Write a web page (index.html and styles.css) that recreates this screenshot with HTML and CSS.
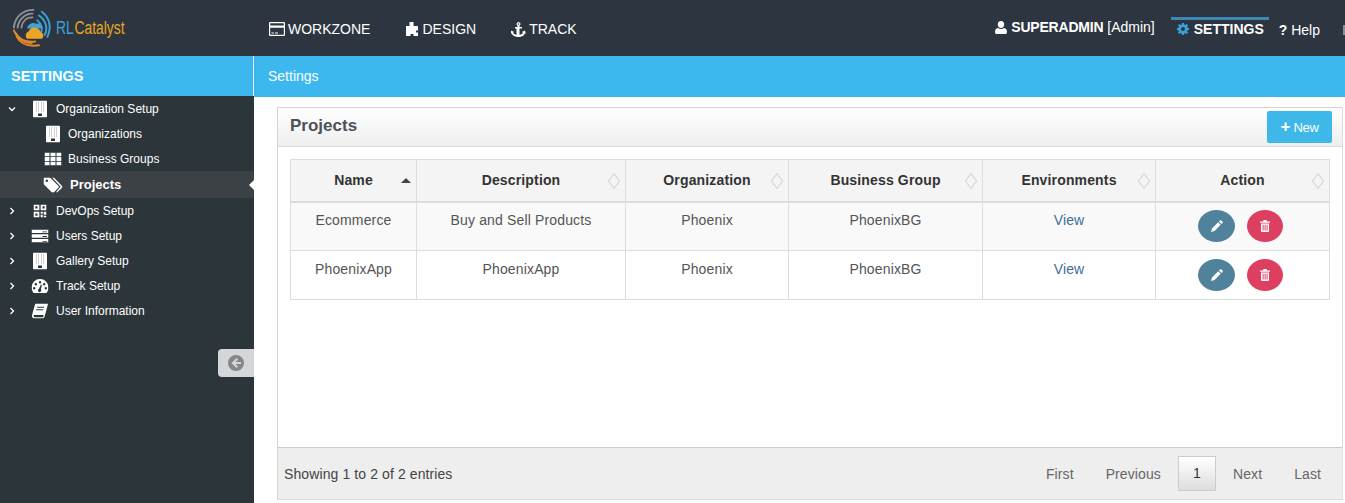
FILE: index.html
```html
<!DOCTYPE html>
<html lang="en">

<head>
    <meta charset="UTF-8" />
    <title>RLCatalyst - Settings</title>
    <link rel="stylesheet" href="styles.css">
</head>

<body>
    <header class="topbar">
        <a class="logo">
            <svg class="logo-mark" viewBox="0 0 44 44" width="41" height="41">
                <g fill="none" stroke-linecap="round">
                    <path d="M2 21C3 10 11 2 23 2" stroke="#8f9296" stroke-width="2" />
                    <path d="M6 21C7 13 13 6 22 6" stroke="#8f9296" stroke-width="2" />
                    <path d="M10 21C11 15 15 10 22 10" stroke="#8f9296" stroke-width="2" />
                    <path d="M32 4C40 10 43 20 38 31" stroke="#3ea4d8" stroke-width="2" />
                    <path d="M29 8C36 13 39 21 35 29" stroke="#3ea4d8" stroke-width="2" />
                    <path d="M27 13C32 17 33 23 31 27" stroke="#3ea4d8" stroke-width="2" />
                    <path d="M2 24C5 32 10 37 21 38" stroke="#e8872a" stroke-width="2" />
                    <path d="M5 31C9 38 16 42 29 40" stroke="#e8872a" stroke-width="2" />
                    <path d="M4 27C8 34 15 37 25 36" stroke="#e8872a" stroke-width="2" />
                </g>
                <path d="M20 24a7 7 0 0 1 10-5c3-1 7 1 7 5z" fill="#3ea4d8" transform="translate(-4 -2)" />
                <path d="M16 33a5 5 0 0 1 2-8 7 7 0 0 1 13 1 4 4 0 0 1 1 7z" fill="#eba524" />
            </svg>
            <span class="logo-text"><span class="logo-rl">RL</span>Catalyst</span>
        </a>
        <nav class="main-nav">
            <a class="nav-item">
                <svg class="icon" viewBox="0 0 16 14" width="16" height="14"><path fill="#fff" fill-rule="evenodd" d="M1 0h14a1 1 0 0 1 1 1v12a1 1 0 0 1-1 1H1a1 1 0 0 1-1-1V1a1 1 0 0 1 1-1zm.2 1.200v2.300h13.600V1.200zm0 4.600v7h13.600v-7zM2.500 10.500h2.500v1H2.500zm3.500 0h3v1H6z" /></svg>
                WORKZONE
            </a>
            <a class="nav-item">
                <svg class="icon" viewBox="0 0 14 14" width="14" height="14"><path fill="#fff" d="M4.500 0h4v4H13v4.500h-2v2h2V14H8.500v-2h-3v2H1V4h3.500z" /></svg>
                DESIGN
            </a>
            <a class="nav-item">
                <svg class="icon" viewBox="0 0 15 15" width="15" height="15"><path fill="#fff" fill-rule="evenodd" d="M7.500 0a2 2 0 0 1 1 3.700V5H11v1.500H8.500v6.300c1.800-.2 3-1 3.500-2L10.800 10l3.200-1.500.8 3.500-1.100-.7C13.500 13.500 11 15 7.500 15S1.500 13.500.3 11.300L-.8 12 0 8.500 3.200 10 2 10.800c.5 1 1.700 1.800 3.500 2V6.500H4V5h2.500V3.700a2 2 0 0 1 1-3.700zm0 1.200a.8.8 0 1 0 0 1.600.8.8 0 0 0 0-1.600z" /></svg>
                TRACK
            </a>
        </nav>
        <div class="user-nav">
            <span class="user-name">
                <svg class="icon" viewBox="0 0 12 13" width="12" height="13"><path fill="#fff" d="M6 0a3.200 3.200 0 0 1 3.200 3.500C9.200 5.500 7.800 7 6 7S2.800 5.500 2.800 3.500A3.200 3.200 0 0 1 6 0zM3 7c.8.700 1.800 1 3 1s2.200-.3 3-1c2 .2 3 1.800 3 4.200 0 1-.7 1.800-1.700 1.800H1.700C.7 13 0 12.200 0 11.200 0 8.800 1 7.200 3 7z" /></svg>
                <span><b>SUPERADMIN</b> [Admin]</span>
            </span>
            <a class="settings-tab">
                <svg class="icon" viewBox="0 0 12 12" width="12" height="12"><path fill="#3aa0dc" fill-rule="evenodd" d="M5 0h2l.3 1.600 1 .4L9.700 1l1.400 1.400-1 1.400.4 1L12 5v2l-1.600.3-.4 1 1 1.400-1.400 1.400-1.400-1-1 .4L7 12H5l-.3-1.600-1-.4-1.400 1L.9 9.600l1-1.400-.4-1L0 7V5l1.600-.3.4-1-1-1.400L2.300 1l1.400 1 1-.4zM6 4a2 2 0 1 0 0 4 2 2 0 0 0 0-4z" /></svg>
                SETTINGS
            </a>
            <a class="help-link"><b>?</b> Help</a>
            <span class="logout-stub"></span>
        </div>
    </header>

    <div class="layout">
        <aside class="sidebar">
            <div class="sidebar-title">SETTINGS</div>
            <ul class="menu">
                <li class="menu-item">
                    <svg class="chev" viewBox="0 0 8 8" width="8" height="8"><path d="M1 2.500l3 3 3-3" /></svg>
                    <svg class="menu-icon" viewBox="0 0 14 17" width="14" height="17"><use href="#building" /></svg>
                    Organization Setup
                </li>
                <li class="menu-item sub">
                    <svg class="menu-icon" viewBox="0 0 14 17" width="14" height="17"><use href="#building" /></svg>
                    Organizations
                </li>
                <li class="menu-item sub">
                    <svg class="menu-icon" viewBox="0 0 17 13" width="17" height="13"><path fill="#fff" d="M0 0h5v3.800H0zm6 0h5v3.800H6zm6 0h5v3.800h-5zM0 4.600h5v3.800H0zm6 0h5v3.800H6zm6 0h5v3.800h-5zM0 9.200h5V13H0zm6 0h5V13H6zm6 0h5V13h-5z" /></svg>
                    Business Groups
                </li>
                <li class="menu-item sub active">
                    <svg class="menu-icon" viewBox="0 0 19 15" width="19" height="15"><path fill="#fff" fill-rule="evenodd" d="M1 0h5.500L15 8.500a1.200 1.200 0 0 1 0 1.700L10.200 15a1.200 1.200 0 0 1-1.700 0L0 6.500V1a1 1 0 0 1 1-1zm2.300 2a1.300 1.300 0 1 0 0 2.600 1.300 1.300 0 0 0 0-2.600z" /><path fill="#fff" d="M8.500 0h1.800l8.300 8.500a1.200 1.200 0 0 1 0 1.700L13.500 15h-1.300l5-5.800z" /></svg>
                    Projects
                </li>
                <li class="menu-item">
                    <svg class="chev" viewBox="0 0 8 8" width="8" height="8"><path d="M2.500 1l3 3-3 3" /></svg>
                    <svg class="menu-icon" viewBox="0 0 14 14" width="13" height="13"><path fill="#fff" fill-rule="evenodd" d="M0 0h6.300v6.300H0zm2 2v2.300h2.300V2zM7.700 0H14v6.300H7.700zm2 2v2.300H12V2zM0 7.700h6.300V14H0zm2 2V12h2.300V9.700zM7.700 7.700H10V10H7.700zm3.300 0h3V11h-3zm-3.300 3.300H10v3H7.700zm3.300 1h3v2h-3z" /></svg>
                    DevOps Setup
                </li>
                <li class="menu-item">
                    <svg class="chev" viewBox="0 0 8 8" width="8" height="8"><path d="M2.500 1l3 3-3 3" /></svg>
                    <svg class="menu-icon" viewBox="0 0 17 13" width="17" height="13"><path fill="#fff" fill-rule="evenodd" d="M0 0h17v3.500H0zm0 4.700h17v3.500H0zm0 4.800h17V13H0zm11-7.600v.8h4.500v-.8zm0 4.700v.8h4.500v-.8zm0 4.800v.8h4.500v-.8z" /></svg>
                    Users Setup
                </li>
                <li class="menu-item">
                    <svg class="chev" viewBox="0 0 8 8" width="8" height="8"><path d="M2.500 1l3 3-3 3" /></svg>
                    <svg class="menu-icon" viewBox="0 0 14 17" width="14" height="17"><use href="#building" /></svg>
                    Gallery Setup
                </li>
                <li class="menu-item">
                    <svg class="chev" viewBox="0 0 8 8" width="8" height="8"><path d="M2.500 1l3 3-3 3" /></svg>
                    <svg class="menu-icon" viewBox="0 0 17 14" width="17" height="14"><path fill="#fff" fill-rule="evenodd" d="M8.500 0A8.500 8.500 0 0 1 17 8.500c0 2-.6 3.700-1.700 5.100-.2.300-.5.400-.8.400H2.500c-.3 0-.6-.1-.8-.4A8.400 8.400 0 0 1 0 8.500 8.500 8.500 0 0 1 8.500 0zM8.500 2a1.200 1.200 0 1 0 0 2.400 1.200 1.200 0 0 0 0-2.400zM4.300 4a1.200 1.200 0 1 0 0 2.400 1.200 1.200 0 0 0 0-2.400zm8.400 0a1.200 1.200 0 1 0 0 2.400 1.200 1.200 0 0 0 0-2.400zM2.700 8a1.200 1.200 0 1 0 0 2.400 1.200 1.200 0 0 0 0-2.400zm11.600 0a1.200 1.200 0 1 0 0 2.400 1.200 1.200 0 0 0 0-2.400zM9.400 5.500L7.500 9.800a1.700 1.700 0 1 0 1.900.5l1-4.500z" /></svg>
                    Track Setup
                </li>
                <li class="menu-item">
                    <svg class="chev" viewBox="0 0 8 8" width="8" height="8"><path d="M2.500 1l3 3-3 3" /></svg>
                    <svg class="menu-icon" viewBox="0 0 16 15" width="16" height="15"><path fill="#fff" fill-rule="evenodd" d="M4 0h11c.7 0 1 .5.8 1.200l-3 11.300c-.3 1.200-1.100 2.500-2.800 2.500H2.500C.8 15 0 13.700 0 12.300 0 12 .1 11.500.2 11L3 1c.1-.6.500-1 1-1zm1.200 3.200l-.3 1h7l.3-1zm-.8 2.600l-.3 1h7l.3-1zM2.800 11.500c-.8 0-1.200.5-1.200 1.100 0 .7.500 1.200 1.200 1.200h7.500c.5 0 .9-.3 1.100-.9l.2-1.400z" /></svg>
                    User Information
                </li>
            </ul>
            <button class="collapse-btn">
                <svg viewBox="0 0 16 16" width="16" height="16"><path fill="#858789" fill-rule="evenodd" d="M8 0a8 8 0 1 1 0 16A8 8 0 0 1 8 0zm.5 3L3.500 8l5 5 1.500-1.500L7.500 9H13V7H7.500L10 4.500z" /></svg>
            </button>
        </aside>

        <main class="content">
            <div class="breadcrumb">Settings</div>
            <section class="panel">
                <div class="panel-head">
                    <h2>Projects</h2>
                    <button class="btn-new"><b>+</b> New</button>
                </div>
                <div class="panel-body">
                    <table class="grid">
                        <colgroup>
                            <col class="c-name"><col class="c-desc"><col class="c-org"><col class="c-bg"><col class="c-env"><col class="c-act">
                        </colgroup>
                        <thead>
                            <tr>
                                <th class="sorted">Name</th>
                                <th>Description</th>
                                <th>Organization</th>
                                <th>Business Group</th>
                                <th>Environments</th>
                                <th>Action</th>
                            </tr>
                        </thead>
                        <tbody>
                            <tr class="odd">
                                <td>Ecommerce</td>
                                <td>Buy and Sell Products</td>
                                <td>Phoenix</td>
                                <td>PhoenixBG</td>
                                <td><a class="view">View</a></td>
                                <td class="actions">
                                    <button class="round edit"><svg viewBox="0 0 12 12" width="12" height="12"><use href="#pencil" /></svg></button>
                                    <button class="round del"><svg viewBox="0 0 10 12" width="10" height="12"><use href="#trash" /></svg></button>
                                </td>
                            </tr>
                            <tr class="even">
                                <td>PhoenixApp</td>
                                <td>PhoenixApp</td>
                                <td>Phoenix</td>
                                <td>PhoenixBG</td>
                                <td><a class="view">View</a></td>
                                <td class="actions">
                                    <button class="round edit"><svg viewBox="0 0 12 12" width="12" height="12"><use href="#pencil" /></svg></button>
                                    <button class="round del"><svg viewBox="0 0 10 12" width="10" height="12"><use href="#trash" /></svg></button>
                                </td>
                            </tr>
                        </tbody>
                    </table>
                </div>
                <div class="panel-foot">
                    <span class="info">Showing 1 to 2 of 2 entries</span>
                    <div class="pager">
                        <a>First</a>
                        <a>Previous</a>
                        <a class="current">1</a>
                        <a>Next</a>
                        <a>Last</a>
                    </div>
                </div>
            </section>
        </main>
    </div>

    <svg class="defs" width="0" height="0">
        <defs>
            <g id="building">
                <path fill="#fff" d="M1 0h12a1 1 0 0 1 1 1v15a1 1 0 0 1-1 1H1a1 1 0 0 1-1-1V1a1 1 0 0 1 1-1z" />
                <path fill="#a8a8a8" d="M3 2h1v1H3zm2 0h1v1H5zm3 0h1v1H8zm2 0h1v1h-1zM3 4h1v1H3zm2 0h1v1H5zm3 0h1v1H8zm2 0h1v1h-1zM3 6h1v1H3zm2 0h1v1H5zm3 0h1v1H8zm2 0h1v1h-1zM3 8h1v1H3zm2 0h1v1H5zm3 0h1v1H8zm2 0h1v1h-1zM3 10h1v1H3zm2 0h1v1H5zm3 0h1v1H8zm2 0h1v1h-1z" />
                <path fill="#2c3539" d="M5 13h4v2.500H5z" />
            </g>
            <path id="pencil" fill="#fff" d="M9 .5a1 1 0 0 1 1.400 0l1.100 1.100a1 1 0 0 1 0 1.400l-1 1L8 1.500zM7.200 2.300l2.500 2.500L3.500 11 0 12l1-3.500z" />
            <path id="trash" fill="#fff" fill-rule="evenodd" d="M3.500 0h3l.5 1.500h3v1.200H0V1.500h3zM1 3.500h8V11a1 1 0 0 1-1 1H2a1 1 0 0 1-1-1zm1.600 1.300v5.700h1V4.800zm2 0v5.700h1V4.800zm2 0v5.700h1V4.800z" />
        </defs>
    </svg>
</body>
</html>
```

FILE: styles.css
```css
* {
    box-sizing: border-box;
}

html, body {
    height: 503px;
    overflow: hidden;
}

body {
    margin: 0;
    font-family: "Liberation Sans", Arial, sans-serif;
    font-size: 14px;
    color: #444;
    background: #fff;
}

.defs {
    position: absolute;
}

.icon {
    flex: none;
}

/* top bar */
.topbar {
    display: flex;
    align-items: center;
    height: 56px;
    background: #2d3640;
    color: #fff;
}

.logo {
    display: flex;
    align-items: center;
    gap: 3px;
    width: 269px;
    padding: 0 0 0 12px;
    flex: none;
    white-space: nowrap;
}

.logo-text {
    display: inline-block;
    font-size: 18px;
    color: #eba524;
    transform: scaleX(0.77);
    transform-origin: left center;
}

.logo-rl {
    color: #3ea4d8;
    margin-right: 1px;
}

.main-nav {
    display: flex;
    gap: 35px;
    padding-top: 2px;
}

.nav-item {
    display: flex;
    align-items: center;
    gap: 3px;
}

.user-nav {
    display: flex;
    align-items: center;
    margin-left: auto;
}

.user-name {
    display: flex;
    align-items: center;
    gap: 4px;
    margin-bottom: 2px;
}

.user-name b {
    letter-spacing: -0.2px;
}

.settings-tab {
    display: flex;
    align-items: center;
    gap: 5px;
    width: 98px;
    height: 32px;
    margin: 10px 0 0 16px;
    padding: 0 0 11px 6px;
    border-top: 3px solid #3e88b4;
    font-weight: bold;
}

.help-link {
    margin: 3px 0 0 10px;
}

.logout-stub {
    width: 2px;
    height: 10px;
    margin: 3px 0 0 23px;
    background: #8a8f94;
}

/* sidebar */
.layout {
    display: flex;
    height: 447px;
}

.sidebar {
    position: relative;
    width: 254px;
    flex: none;
    background: #2c3539;
    color: #fff;
}

.sidebar-title {
    height: 40px;
    line-height: 40px;
    padding-left: 11px;
    border-right: 1px solid #e8eef2;
    background: #3db8ef;
    font-weight: bold;
    font-size: 14.5px;
}

.menu {
    list-style: none;
    margin: 0;
    padding: 0;
}

.menu-item {
    position: relative;
    display: flex;
    align-items: center;
    height: 25px;
    padding-left: 56px;
    font-size: 12px;
}

.chev {
    position: absolute;
    left: 8px;
    top: 9px;
    fill: none;
    stroke: #fff;
    stroke-width: 1.3;
}

.menu-icon {
    position: absolute;
    left: 40px;
    top: 50%;
    transform: translate(-50%, -50%);
}

.sub {
    padding-left: 68px;
}

.sub .menu-icon {
    left: 52.5px;
}

.active {
    height: 27px;
    padding-left: 70px;
    background: #3b4144;
    font-weight: bold;
    font-size: 13px;
}

.active::after {
    content: "";
    position: absolute;
    right: 0;
    top: 9px;
    border: 5px solid transparent;
    border-right-color: #fff;
    border-left-width: 0;
}

.collapse-btn {
    position: absolute;
    right: 0;
    top: 293px;
    width: 36px;
    height: 28px;
    padding: 0 1px 0 0;
    border: none;
    border-radius: 4px 0 0 4px;
    background: #d5d6da;
}

.collapse-btn svg {
    display: block;
    margin: 0 auto;
}

/* content */
.content {
    flex: 1;
    min-width: 0;
}

.breadcrumb {
    height: 41px;
    line-height: 40px;
    padding-left: 14px;
    background: #3db8ef;
    color: #fff;
    font-size: 14px;
}

.panel {
    display: flex;
    flex-direction: column;
    height: 393px;
    margin: 10px 2px 0 23px;
    border: 1px solid #d8d4cc;
    border-right-color: #ddd;
    border-bottom-color: #ddd;
}

.panel-head {
    display: flex;
    align-items: center;
    justify-content: space-between;
    height: 39px;
    padding: 0 10px 0 12px;
    border-bottom: 1px solid #ddd;
    background: linear-gradient(#fff, #eee);
}

.panel-head h2 {
    margin: 0 0 3px;
    font-size: 17px;
    color: #4c5259;
}

.btn-new {
    width: 65px;
    height: 32px;
    border: none;
    border-radius: 2px;
    background: #3db8e8;
    color: #fff;
    font-family: inherit;
    font-size: 13px;
    letter-spacing: -0.3px;
}

.btn-new b {
    font-size: 17px;
    line-height: 13px;
}

.panel-body {
    flex: 1;
    padding: 12px 12px 0;
}

/* table */
.grid {
    table-layout: fixed;
    width: 1039px;
    border-collapse: collapse;
    letter-spacing: 0.15px;
    border: 1px solid #ddd;
}

.c-name { width: 126px; }
.c-desc { width: 209px; }
.c-org { width: 163px; }
.c-bg { width: 194px; }
.c-env { width: 173px; }
.c-act { width: 174px; }

.grid th {
    position: relative;
    height: 42px;
    padding: 0;
    border: 1px solid #ddd;
    border-bottom: 2px solid #ddd;
    background: #f4f4f4;
    color: #333;
    font-size: 14px;
    letter-spacing: 0.15px;
}

.grid th::after {
    content: "";
    position: absolute;
    right: 6px;
    top: 16px;
    width: 8px;
    height: 8px;
    border: 1px solid #d4d4d4;
    transform: scale(0.88, 1.15) rotate(45deg);
}

.grid th.sorted::after {
    right: 5px;
    top: 18px;
    width: 0;
    height: 0;
    border: 5px solid transparent;
    border-top-width: 0;
    border-bottom-color: #444;
    transform: none;
}

.grid td {
    height: 49px;
    padding: 8px 0 0;
    border: 1px solid #ddd;
    text-align: center;
    vertical-align: top;
    line-height: 18px;
    color: #555;
}

.odd td {
    background: #f9f9f9;
}

.even td {
    padding-top: 9px;
}

.view {
    color: #3f6d9b;
}

.grid td.actions {
    padding: 8px 4px 0 0;
    font-size: 0;
}

.grid .odd td.actions {
    padding-top: 7px;
}

.round {
    width: 37px;
    height: 32px;
    padding: 0;
    border: none;
    border-radius: 50%;
    vertical-align: top;
}

.round svg {
    display: block;
    margin: 0 auto;
}

.edit {
    background: #50839b;
    margin-right: 11px;
}

.del {
    width: 36px;
    background: #dd3f60;
}

/* footer */
.panel-foot {
    display: flex;
    align-items: center;
    justify-content: space-between;
    height: 52px;
    padding: 0 5px 0 6px;
    border-top: 1px solid #ccc;
    background: #eee;
    color: #444;
    letter-spacing: 0.1px;
}

.pager {
    display: flex;
    align-items: center;
}

.pager a {
    padding: 0 16px;
    color: #666;
}

.pager .current {
    width: 38px;
    height: 35px;
    line-height: 33px;
    margin: 0 1px;
    padding: 0;
    text-align: center;
    border: 1px solid #ccc;
    background: linear-gradient(#fff, #ddd);
    color: #333;
}
```
